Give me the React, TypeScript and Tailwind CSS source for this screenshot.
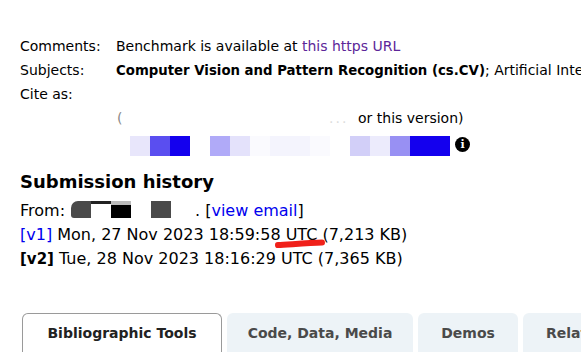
import React from "react";

const font = { fontFamily: '"DejaVu Sans", Verdana, sans-serif' };

const blocks = [
  "#e8e6fb", "#5a4ef0", "#1400ee", "#ffffff", "#b0aaf8", "#e4e2fb", "#fafafe",
  "#f4f4fd", "#f4f4fd", "#fafafe", "#ffffff", "#d2cff8", "#ecebfc", "#9890f3",
  "#1400ee", "#1400ee",
];

export default function App() {
  return (
    <div className="w-[581px] h-[352px] overflow-hidden bg-white text-[14px] text-black" style={font}>
      <div className="pl-[20px] pt-[34px]">
        {/* meta table */}
        <div className="flex h-[24px] items-center whitespace-nowrap">
          <span className="w-[96px] shrink-0">Comments:</span>
          <span>
            Benchmark is available at <a className="text-[#5c2699]">this https URL</a>
          </span>
        </div>
        <div className="flex h-[24px] items-center whitespace-nowrap">
          <span className="w-[96px] shrink-0">Subjects:</span>
          <span>
            <b className="text-[13.3px]">Computer Vision and Pattern Recognition (cs.CV)</b>; Artificial Intelligence (cs.AI)
          </span>
        </div>
        <div className="flex h-[24px] items-center whitespace-nowrap">
          <span className="w-[96px] shrink-0">Cite as:</span>
        </div>
        <div className="flex h-[24px] items-center whitespace-nowrap">
          <span className="ml-[97px] w-[212px] shrink-0 text-[#888]">(</span>
          <span className="w-[29px] shrink-0 text-[#ddd] tracking-[2px]">...</span>
          <span>or this version)</span>
        </div>
        {/* pixelated link */}
        <div className="flex h-[20px] items-center ml-[110px] mt-[6px]">
          {blocks.map((c, i) => (
            <div key={i} className="w-[20px] h-[20px]" style={{ backgroundColor: c }} />
          ))}
          <div className="ml-[5px] -mt-[4px] w-[15px] h-[15px] rounded-full bg-black text-white text-[11px] font-bold flex items-center justify-center leading-none" style={{ fontFamily: '"DejaVu Serif", serif' }}>
            i
          </div>
        </div>

        <h2 className="mt-[12px] text-[18px] font-bold leading-[28px]">Submission history</h2>
        <div className="text-[16px] mt-[3px]">
          <div className="flex h-[24px] items-center whitespace-nowrap">
            <span>From:</span>
            <div className="ml-[6px] -mt-[4px] w-[20px] h-[17px] rounded-tl-[7px] rounded-bl-[3px] bg-[#4a4a4a]" />
            <div className="-mt-[18px] w-[20px] h-[3px] bg-[#222]" />
            <div className="-mt-[4px] w-[20px] h-[17px] bg-black border-t-[4px] border-[#bbb]" />
            <div className="ml-[20px] -mt-[4px] w-[20px] h-[17px] bg-[#4a4a4a]" />
            <span className="ml-[24px]">. [<a className="text-[#0000ee]">view email</a>]</span>
          </div>
          <div className="relative flex h-[24px] items-center whitespace-nowrap">
            <span>
              <a className="text-[#0000ee]">[v1]</a> Mon, 27 Nov 2023 18:59:58 UTC (7,213 KB)
            </span>
            <svg className="absolute left-[254px] top-[15px]" width="52" height="11" viewBox="0 0 52 11">
              <path d="M4 7 C 14 6.5, 34 5, 48 4.5" stroke="#f0201a" strokeWidth="6" strokeLinecap="round" fill="none" />
            </svg>
          </div>
          <div className="flex h-[24px] items-center whitespace-nowrap">
            <span>
              <b className="text-[15px]">[v2]</b> Tue, 28 Nov 2023 18:16:29 UTC (7,365 KB)
            </span>
          </div>
        </div>

        {/* tabs */}
        <div className="mt-[42px] ml-[2px] flex gap-[5px] whitespace-nowrap">
          <div className="w-[200px] h-[40px] shrink-0 rounded-t-[6px] border border-b-0 border-[#9a9a9a] bg-white flex items-center justify-center font-bold text-[#222]">
            Bibliographic Tools
          </div>
          <div className="w-[186px] h-[40px] shrink-0 rounded-t-[6px] bg-[#edf3f7] flex items-center justify-center font-bold text-[#4a4a4a]">
            Code, Data, Media
          </div>
          <div className="w-[100px] h-[40px] shrink-0 rounded-t-[6px] bg-[#edf3f7] flex items-center justify-center font-bold text-[#4a4a4a]">
            Demos
          </div>
          <div className="w-[140px] h-[40px] shrink-0 rounded-t-[6px] bg-[#edf3f7] flex items-center pl-[23px] font-bold text-[#4a4a4a]">
            Related Papers
          </div>
        </div>
      </div>
    </div>
  );
}
